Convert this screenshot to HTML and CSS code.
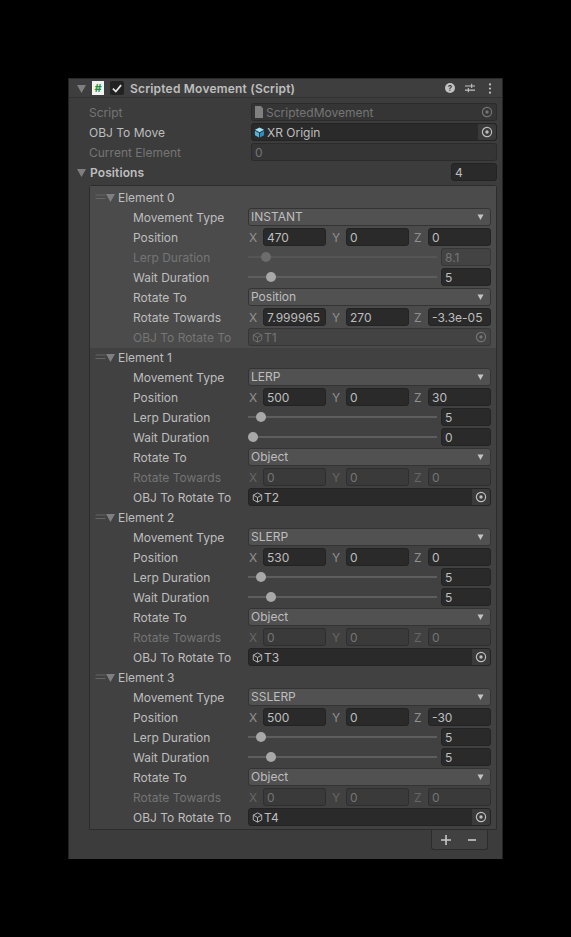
FILE: index.html
```html
<!DOCTYPE html>
<html lang="en">
<head>
    <meta charset="UTF-8">
    <title>Scripted Movement (Script)</title>
    <link rel="stylesheet" href="styles.css">
</head>
<body>
<svg class="defs">
    <symbol id="tri" viewBox="0 0 10 10"><path d="M0 1h10L5 10z" fill="currentColor"/></symbol>
    <symbol id="target" viewBox="0 0 12 12"><circle cx="6" cy="6" r="4.6" fill="none" stroke="currentColor" stroke-width="1.2"/><circle cx="6" cy="6" r="1.7" fill="currentColor"/></symbol>
    <symbol id="cube" viewBox="0 0 12 12"><path d="M6 1l4.6 2.4v5.2L6 11 1.4 8.6V3.4zM1.4 3.4L6 6l4.6-2.6M6 6v5" fill="none" stroke="currentColor" stroke-width="1"/></symbol>
    <symbol id="blue" viewBox="0 0 12 12"><path d="M6 0.6l5 2.5L6 5.7 1 3.1z" fill="#9fe0f5"/><path d="M1 4l4.5 2.5v5L1 9z" fill="#4fb4dc"/><path d="M11 4L6.5 6.5v5L11 9z" fill="#2c8fc0"/></symbol>
    <symbol id="grip" viewBox="0 0 10 6"><path d="M0 1h10M0 4.500h10" stroke="currentColor" stroke-width="1"/></symbol>
</svg>

<div class="inspector">
    <div class="header">
        <svg class="tri head-tri"><use href="#tri"/></svg>
        <span class="script-icon">#</span>
        <span class="checkbox"><svg viewBox="0 0 12 12"><path d="M2.500 6.500l2.500 2.500 4.500-5.500" fill="none" stroke="#e6e6e6" stroke-width="1.500"/></svg></span>
        <span class="title">Scripted Movement (Script)</span>
        <span class="help">?</span>
        <svg class="tune" viewBox="0 0 12 12"><path d="M0 3.500h12M0 8.500h12M8 1v5M4 6v5" fill="none" stroke="#c2c2c2" stroke-width="1.300"/></svg>
        <svg class="kebab" viewBox="0 0 4 12"><circle cx="2" cy="1.500" r="1.200" fill="#c2c2c2"/><circle cx="2" cy="6" r="1.200" fill="#c2c2c2"/><circle cx="2" cy="10.500" r="1.200" fill="#c2c2c2"/></svg>
    </div>

    <div class="top">
        <div class="row off">
            <span class="top-label">Script</span>
            <div class="field obj">
                <svg class="doc" viewBox="0 0 10 12"><path d="M1 0h6l2 2.500V12H1z" fill="#808080"/></svg>
                <span class="grow">ScriptedMovement</span>
                <svg class="pick"><use href="#target"/></svg>
            </div>
        </div>
        <div class="row">
            <span class="top-label">OBJ To Move</span>
            <div class="field obj">
                <svg class="cube"><use href="#blue"/></svg>
                <span class="grow">XR Origin</span>
                <span class="pick-btn"><svg class="pick"><use href="#target"/></svg></span>
            </div>
        </div>
        <div class="row off">
            <span class="top-label">Current Element</span>
            <div class="field plain">0</div>
        </div>
        <div class="row list-row">
            <svg class="tri head-tri"><use href="#tri"/></svg>
            <span class="list-title">Positions</span>
            <div class="field count">4</div>
        </div>
    </div>

    <div class="list">
        <div class="element selected">
            <div class="el-head"><svg class="grip"><use href="#grip"/></svg><svg class="tri"><use href="#tri"/></svg><span>Element 0</span></div>
            <div class="row"><span class="label">Movement Type</span><div class="drop"><span>INSTANT</span><svg class="tri small"><use href="#tri"/></svg></div></div>
            <div class="row"><span class="label">Position</span><div class="vec"><span class="axis">X</span><div class="field">470</div><span class="axis">Y</span><div class="field">0</div><span class="axis">Z</span><div class="field">0</div></div></div>
            <div class="row off"><span class="label">Lerp Duration</span><div class="slider"><div class="track"><i class="thumb" style="left:13px"></i></div><div class="field num">8.1</div></div></div>
            <div class="row"><span class="label">Wait Duration</span><div class="slider"><div class="track"><i class="thumb" style="left:18px"></i></div><div class="field num">5</div></div></div>
            <div class="row"><span class="label">Rotate To</span><div class="drop"><span>Position</span><svg class="tri small"><use href="#tri"/></svg></div></div>
            <div class="row"><span class="label">Rotate Towards</span><div class="vec"><span class="axis">X</span><div class="field">7.999965</div><span class="axis">Y</span><div class="field">270</div><span class="axis">Z</span><div class="field">-3.3e-05</div></div></div>
            <div class="row off"><span class="label">OBJ To Rotate To</span><div class="field ref"><svg class="cube line"><use href="#cube"/></svg><span class="grow">T1</span><svg class="pick"><use href="#target"/></svg></div></div>
        </div>

        <div class="element">
            <div class="el-head"><svg class="grip"><use href="#grip"/></svg><svg class="tri"><use href="#tri"/></svg><span>Element 1</span></div>
            <div class="row"><span class="label">Movement Type</span><div class="drop"><span>LERP</span><svg class="tri small"><use href="#tri"/></svg></div></div>
            <div class="row"><span class="label">Position</span><div class="vec"><span class="axis">X</span><div class="field">500</div><span class="axis">Y</span><div class="field">0</div><span class="axis">Z</span><div class="field">30</div></div></div>
            <div class="row"><span class="label">Lerp Duration</span><div class="slider"><div class="track"><i class="thumb" style="left:8px"></i></div><div class="field num">5</div></div></div>
            <div class="row"><span class="label">Wait Duration</span><div class="slider"><div class="track"><i class="thumb" style="left:0px"></i></div><div class="field num">0</div></div></div>
            <div class="row"><span class="label">Rotate To</span><div class="drop"><span>Object</span><svg class="tri small"><use href="#tri"/></svg></div></div>
            <div class="row off"><span class="label">Rotate Towards</span><div class="vec"><span class="axis">X</span><div class="field">0</div><span class="axis">Y</span><div class="field">0</div><span class="axis">Z</span><div class="field">0</div></div></div>
            <div class="row"><span class="label">OBJ To Rotate To</span><div class="field ref"><svg class="cube line"><use href="#cube"/></svg><span class="grow">T2</span><span class="pick-btn"><svg class="pick"><use href="#target"/></svg></span></div></div>
        </div>

        <div class="element">
            <div class="el-head"><svg class="grip"><use href="#grip"/></svg><svg class="tri"><use href="#tri"/></svg><span>Element 2</span></div>
            <div class="row"><span class="label">Movement Type</span><div class="drop"><span>SLERP</span><svg class="tri small"><use href="#tri"/></svg></div></div>
            <div class="row"><span class="label">Position</span><div class="vec"><span class="axis">X</span><div class="field">530</div><span class="axis">Y</span><div class="field">0</div><span class="axis">Z</span><div class="field">0</div></div></div>
            <div class="row"><span class="label">Lerp Duration</span><div class="slider"><div class="track"><i class="thumb" style="left:8px"></i></div><div class="field num">5</div></div></div>
            <div class="row"><span class="label">Wait Duration</span><div class="slider"><div class="track"><i class="thumb" style="left:18px"></i></div><div class="field num">5</div></div></div>
            <div class="row"><span class="label">Rotate To</span><div class="drop"><span>Object</span><svg class="tri small"><use href="#tri"/></svg></div></div>
            <div class="row off"><span class="label">Rotate Towards</span><div class="vec"><span class="axis">X</span><div class="field">0</div><span class="axis">Y</span><div class="field">0</div><span class="axis">Z</span><div class="field">0</div></div></div>
            <div class="row"><span class="label">OBJ To Rotate To</span><div class="field ref"><svg class="cube line"><use href="#cube"/></svg><span class="grow">T3</span><span class="pick-btn"><svg class="pick"><use href="#target"/></svg></span></div></div>
        </div>

        <div class="element">
            <div class="el-head"><svg class="grip"><use href="#grip"/></svg><svg class="tri"><use href="#tri"/></svg><span>Element 3</span></div>
            <div class="row"><span class="label">Movement Type</span><div class="drop"><span>SSLERP</span><svg class="tri small"><use href="#tri"/></svg></div></div>
            <div class="row"><span class="label">Position</span><div class="vec"><span class="axis">X</span><div class="field">500</div><span class="axis">Y</span><div class="field">0</div><span class="axis">Z</span><div class="field">-30</div></div></div>
            <div class="row"><span class="label">Lerp Duration</span><div class="slider"><div class="track"><i class="thumb" style="left:8px"></i></div><div class="field num">5</div></div></div>
            <div class="row"><span class="label">Wait Duration</span><div class="slider"><div class="track"><i class="thumb" style="left:18px"></i></div><div class="field num">5</div></div></div>
            <div class="row"><span class="label">Rotate To</span><div class="drop"><span>Object</span><svg class="tri small"><use href="#tri"/></svg></div></div>
            <div class="row off"><span class="label">Rotate Towards</span><div class="vec"><span class="axis">X</span><div class="field">0</div><span class="axis">Y</span><div class="field">0</div><span class="axis">Z</span><div class="field">0</div></div></div>
            <div class="row"><span class="label">OBJ To Rotate To</span><div class="field ref"><svg class="cube line"><use href="#cube"/></svg><span class="grow">T4</span><span class="pick-btn"><svg class="pick"><use href="#target"/></svg></span></div></div>
        </div>
    </div>

    <div class="footer">
        <svg viewBox="0 0 10 10"><path d="M5 0v10M0 5h10" stroke="#c8c8c8" stroke-width="1.600"/></svg>
        <svg viewBox="0 0 10 10"><path d="M1 5h8" stroke="#c8c8c8" stroke-width="1.600"/></svg>
    </div>
</div>
</body>
</html>
```

FILE: styles.css
```css
html, body {
    margin: 0;
    background-color: #000;
}
body {
    height: 937px;
    overflow: hidden;
    font-family: Inter, "Noto Sans", sans-serif;
    font-size: 12px;
    color: #bebebe;
}
.defs {
    display: none;
}
.inspector {
    box-sizing: border-box;
    width: 435px;
    height: 781px;
    margin: 0 0 0 68px;
    position: relative;
    top: 78px;
    background-color: #3c3c3c;
    border-left: 1px solid #232323;
    border-right: 1px solid #232323;
}

/* component header */
.header {
    display: flex;
    align-items: center;
    height: 20px;
    background-color: #3e3e3e;
    border-top: 1px solid #2a2a2a;
    border-bottom: 1px solid #333;
    box-sizing: border-box;
}
.tri {
    width: 9px;
    height: 9px;
    color: #7f7f7f;
    flex: none;
}
.head-tri {
    margin-left: 8px;
}
.script-icon {
    width: 12px;
    height: 14px;
    margin-left: 6px;
    background-color: #f2f2f2;
    color: #1f8f3a;
    font-size: 11px;
    font-weight: 700;
    line-height: 14px;
    text-align: center;
}
.checkbox {
    display: flex;
    width: 14px;
    height: 14px;
    margin-left: 6px;
    background-color: #222;
    border-radius: 2px;
}
.title {
    margin-left: 6px;
    font-weight: 600;
    letter-spacing: 0.2px;
    flex: 1;
}
.help {
    width: 10px;
    height: 10px;
    border-radius: 50%;
    background-color: #c2c2c2;
    color: #3c3c3c;
    font-size: 8px;
    font-weight: 700;
    line-height: 10px;
    text-align: center;
}
.tune {
    width: 10px;
    height: 10px;
    margin-left: 10px;
}
.kebab {
    width: 4px;
    height: 11px;
    margin-left: 13px;
    margin-right: 10px;
}

/* rows */
.top {
    padding: 5px 5px 0 0;
}
.row {
    display: flex;
    height: 18px;
    margin-bottom: 2px;
    line-height: 20px;
}
.off {
    color: #757575;
}
.top-label {
    width: 182px;
    padding-left: 20px;
    box-sizing: border-box;
    flex: none;
}
.field {
    box-sizing: border-box;
    height: 18px;
    padding: 0 3px;
    background-color: #2a2a2a;
    border: 1px solid #232323;
    border-radius: 3px;
    line-height: 17px;
    color: #bebebe;
    flex: 1;
    min-width: 0;
    white-space: nowrap;
    overflow: hidden;
}
.off .field {
    background-color: rgba(0, 0, 0, 0.1);
    border-color: rgba(0, 0, 0, 0.2);
    color: #757575;
}
.plain {
    flex: 1;
}
.obj, .ref {
    display: flex;
    align-items: center;
    padding: 0 0 0 2px;
}
.ref {
    padding-left: 3px;
}
.grow {
    flex: 1;
    margin-left: 2px;
}
.doc {
    width: 10px;
    height: 12px;
}
.cube {
    width: 11px;
    height: 11px;
    flex: none;
}
.line {
    color: #bebebe;
}
.off .line {
    color: #757575;
}
.ref .grow {
    margin-left: 1px;
}
.pick {
    width: 12px;
    height: 12px;
    margin-right: 3px;
    display: block;
}
.pick-btn {
    display: flex;
    align-items: center;
    justify-content: center;
    width: 18px;
    height: 16px;
    background-color: #3a3a3a;
    border-radius: 0 2px 2px 0;
}
.pick-btn .pick {
    margin: 0;
}
.list-row .head-tri {
    margin-top: 5px;
}
.list-title {
    margin-left: 4px;
    font-weight: 600;
    letter-spacing: 0.1px;
    flex: 1;
}
.count {
    flex: none;
    width: 46px;
}

/* list of elements */
.list {
    box-sizing: border-box;
    width: 408px;
    height: 645px;
    margin: 4px 0 0 20px;
    background-color: #414141;
    border: 1px solid #2c2c2c;
    border-radius: 3px 3px 0 0;
    padding-top: 2px;
}
.element {
    height: 160px;
}
.selected {
    background-color: #4b4b4b;
    margin-top: -2px;
    padding-top: 2px;
}
.el-head {
    display: flex;
    align-items: center;
    box-sizing: border-box;
    height: 20px;
    padding: 0 0 2px 5px;
}
.grip {
    width: 11px;
    height: 6px;
    color: #666;
}
.el-head .tri {
    margin: 0 3px 0 0;
}
.label {
    width: 158px;
    padding-left: 43px;
    box-sizing: border-box;
    flex: none;
}
.drop {
    display: flex;
    align-items: center;
    justify-content: space-between;
    box-sizing: border-box;
    width: 243px;
    height: 18px;
    padding: 0 6px 0 2px;
    background-color: #515151;
    border: 1px solid #343434;
    border-radius: 3px;
    line-height: 16px;
}
.small {
    width: 7px;
    height: 6px;
    color: #c4c4c4;
}
.vec {
    display: flex;
    width: 243px;
}
.axis {
    width: 15px;
    padding-left: 1px;
    box-sizing: border-box;
    flex: none;
    color: #909090;
}
.off .axis {
    color: #666;
}
.vec .field {
    flex: none;
    width: 63px;
    margin-right: 5px;
}
.vec .field:nth-of-type(2) {
    margin-right: 4px;
}
.vec .field:last-child {
    margin-right: 0;
}
.slider {
    display: flex;
    align-items: center;
    width: 243px;
}
.track {
    position: relative;
    width: 189px;
    height: 2px;
    background-color: #5e5e5e;
    margin-right: 4px;
}
.off .track {
    background-color: #555;
}
.thumb {
    position: absolute;
    top: -4px;
    width: 10px;
    height: 10px;
    border-radius: 50%;
    background-color: #a8a8a8;
}
.off .thumb {
    background-color: #6c6c6c;
}
.num {
    flex: none;
    width: 50px;
}
.ref {
    flex: none;
    width: 243px;
}

.footer {
    display: flex;
    align-items: center;
    gap: 16px;
    box-sizing: border-box;
    width: 57px;
    height: 20px;
    margin-left: 362px;
    padding: 0 9px;
    background-color: #414141;
    border: 1px solid #2c2c2c;
    border-top: none;
    border-radius: 0 0 3px 3px;
}
.footer svg {
    width: 10px;
    height: 10px;
}
```
